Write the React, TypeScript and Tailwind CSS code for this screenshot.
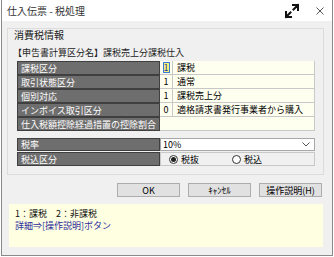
import React from "react";

const font = { fontFamily: '"Noto Sans CJK JP", "Noto Sans", sans-serif' };

function LabelCell({ children, h = 14 }: { children: React.ReactNode; h?: number }) {
  return (
    <div
      className={`w-[143px] ${h === 14 ? "h-[14px]" : "h-[13px]"} bg-[#6e6e6e] border border-[#3f3f3f] text-white text-[9px] leading-none flex items-center pl-[3px] shrink-0 whitespace-nowrap overflow-hidden`}
    >
      {children}
    </div>
  );
}

function Row({ label, code, text, highlight }: { label: string; code?: string; text?: string; highlight?: boolean }) {
  return (
    <div className="flex h-[14px]">
      <LabelCell>{label}</LabelCell>
      {code !== undefined ? (
        <>
          <div className="w-[12px] h-[14px] bg-[#fffff0] border-b border-[#c8c8c8] flex items-center justify-center text-[9px] leading-none shrink-0">
            {highlight ? (
              <span className="w-[7px] h-[11px] border border-[#3a7bd5] bg-[#f5f07a] flex items-center justify-center text-[9px] text-[#1b3fa0]">1</span>
            ) : (
              <span>{code}</span>
            )}
          </div>
          <div className="flex-1 h-[14px] bg-[#fffff0] border-l border-b border-r border-[#c8c8c8] text-[9px] leading-none flex items-center pl-[4px] whitespace-nowrap">
            {text}
          </div>
        </>
      ) : (
        <div className="flex-1 h-[14px] bg-[#fffff0] border-b border-r border-[#c8c8c8]" />
      )}
    </div>
  );
}

export default function App() {
  return (
    <div className="w-[334px] h-[257px] bg-white overflow-hidden" style={font}>
      <div className="ml-[1px] w-[332px] h-[256px] border-l border-r border-b border-[#8a8a8a] bg-[#f0f0f0] flex flex-col">
        {/* title bar */}
        <div className="h-[21px] bg-white flex items-center pl-[5px] pr-[6px] shrink-0">
          <span className="text-[10px] text-[#333] leading-none whitespace-nowrap">仕入伝票 - 税処理</span>
          <div className="flex-1" />
          <svg width="16" height="16" viewBox="0 0 16 16" className="mr-[16px]">
            <path d="M9 2h5v5M14 2L9.5 6.5M7 14H2V9M2 14l4.5-4.5" stroke="#111" strokeWidth="2" fill="none" strokeLinecap="square" />
          </svg>
          <svg width="8" height="8" viewBox="0 0 8 8" className="mr-[2px]">
            <path d="M0.5 0.5L7.5 7.5M7.5 0.5L0.5 7.5" stroke="#555" strokeWidth="1" />
          </svg>
        </div>

        {/* group box */}
        <div className="mt-[7px] ml-[5px] w-[317px] h-[147px] border border-[#dcdcdc] pt-[1px] shrink-0">
          <div className="h-[10px] text-[10px] leading-[10px] pl-[6px] text-[#222] whitespace-nowrap">消費税情報</div>
          <div className="h-[10px] text-[9px] leading-[10px] pl-[5px] mt-[8px] text-[#222] whitespace-nowrap">【申告書計算区分名】課税売上分課税仕入</div>
          <div className="ml-[9px] mr-[8px] mt-[3px] flex flex-col">
            <Row label="課税区分" code="1" text="課税" highlight />
            <Row label="取引状態区分" code="1" text="通常" />
            <Row label="個別対応" code="1" text="課税売上分" />
            <Row label="インボイス取引区分" code="0" text="適格請求書発行事業者から購入" />
            <Row label="仕入税額控除経過措置の控除割合" />
          </div>
          <div className="ml-[9px] mr-[8px] mt-[7px] flex flex-col">
            <div className="flex h-[13px]">
              <LabelCell h={13}>税率</LabelCell>
              <div className="flex-1 h-[13px] bg-white border border-[#a8a8a8] flex items-center pl-[2px] text-[9px] leading-none">
                <span>10%</span>
                <div className="flex-1" />
                <svg width="8" height="5" viewBox="0 0 8 5" className="mr-[4px]">
                  <path d="M0.5 0.5L4 4L7.5 0.5" stroke="#555" strokeWidth="1" fill="none" />
                </svg>
              </div>
            </div>
            <div className="flex h-[14px] mt-[1px]">
              <LabelCell>税込区分</LabelCell>
              <div className="flex-1 h-[14px] bg-[#f0f0f0] border border-[#c8c8c8] flex items-center text-[9px] leading-none whitespace-nowrap">
                <span className="ml-[8px] w-[9px] h-[9px] rounded-full border border-[#333] flex items-center justify-center bg-white shrink-0">
                  <span className="w-[5px] h-[5px] rounded-full bg-[#222]" />
                </span>
                <span className="ml-[3px]">税抜</span>
                <span className="ml-[33px] w-[9px] h-[9px] rounded-full border border-[#333] bg-white shrink-0" />
                <span className="ml-[3px]">税込</span>
              </div>
            </div>
          </div>
        </div>

        {/* buttons */}
        <div className="flex mt-[8px] ml-[115px] gap-[8px] shrink-0">
          <div className="w-[63px] h-[14px] bg-[#e1e1e1] border border-[#adadad] flex items-center justify-center text-[9px] leading-none">OK</div>
          <div className="w-[63px] h-[14px] bg-[#e1e1e1] border border-[#adadad] flex items-center justify-center text-[9px] leading-none">ｷｬﾝｾﾙ</div>
          <div className="w-[63px] h-[14px] bg-[#e1e1e1] border border-[#adadad] flex items-center justify-center text-[9px] leading-none whitespace-nowrap">操作説明(H)</div>
        </div>

        {/* help panel */}
        <div className="mt-[7px] ml-[7px] w-[314px] h-[43px] bg-[#ffffe1] pl-[6px] pt-[4px] shrink-0">
          <div className="text-[9px] leading-[11px] text-[#111] whitespace-nowrap">1：課税　2：非課税</div>
          <div className="text-[9px] leading-[11px] text-[#2c2c9c] mt-[1px] whitespace-nowrap">詳細⇒[操作説明]ボタン</div>
        </div>
      </div>
    </div>
  );
}
